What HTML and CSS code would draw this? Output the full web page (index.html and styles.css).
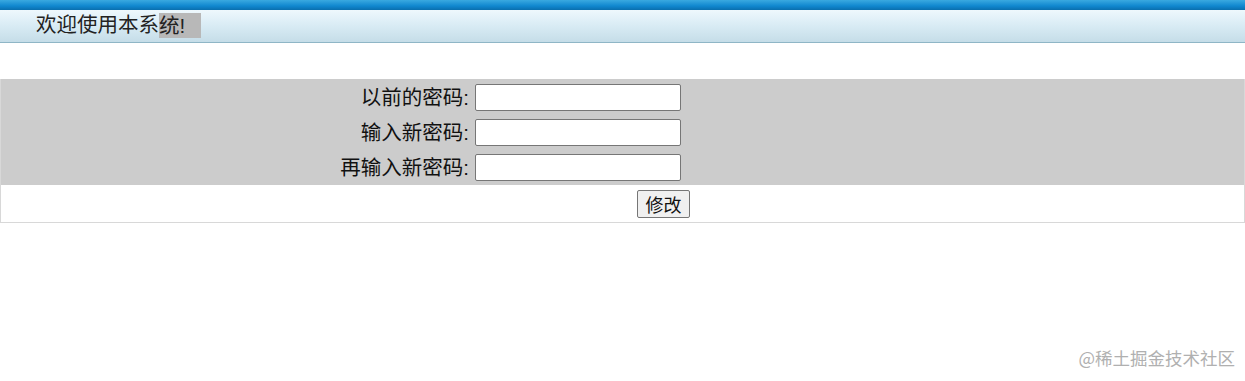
FILE: index.html
```html
<!DOCTYPE html>
<html lang="zh">
<head>
    <meta charset="UTF-8">
    <title>修改密码</title>
    <link rel="stylesheet" href="styles.css">
</head>
<body>
    <div class="top">
        <div class="top-bar"></div>
        <div class="welcome">
            <span>欢迎使用本系</span><span class="sel">统!</span>
        </div>
    </div>

    <form class="pwd-form">
        <div class="fields">
            <label class="label" for="oldPwd">以前的密码:</label>
            <div class="cell"><input type="password" id="oldPwd"></div>
            <label class="label" for="newPwd">输入新密码:</label>
            <div class="cell"><input type="password" id="newPwd"></div>
            <label class="label" for="newPwd2">再输入新密码:</label>
            <div class="cell"><input type="password" id="newPwd2"></div>
        </div>
        <div class="actions">
            <button type="button">修改</button>
        </div>
    </form>

    <div class="watermark">@稀土掘金技术社区</div>
</body>
</html>
```
FILE: styles.css
```css
body {
    margin: 0;
    font-family: "Liberation Sans", "Noto Sans CJK SC", sans-serif;
    color: #111;
    background: #fff;
}

.top {
    height: 43px;
}
.top-bar {
    height: 10px;
    background: linear-gradient(#3aa9e0, #1087cf 60%, #0a6fae);
}
.welcome {
    height: 32px;
    border-bottom: 1px solid #8fb6c6;
    background: linear-gradient(#eef8fd, #d8ebf4 50%, #c5dde8);
    padding-left: 36px;
    font-size: 20.5px;
    line-height: 30px;
    color: #222;
}
.sel {
    display: inline-block;
    background: #b8b8b8;
    height: 25px;
    line-height: 26px;
    padding-right: 16px;
    vertical-align: top;
    margin-top: 3px;
}

.pwd-form {
    margin-top: 36px;
    border: 1px solid #d8d8d8;
    border-top: none;
}
.fields {
    display: grid;
    grid-template-columns: 474px 1fr;
    grid-auto-rows: 35px;
    background: #cccccc;
    padding-top: 1px;
}
.label {
    text-align: right;
    padding-right: 6px;
    font-size: 20.5px;
    line-height: 35px;
    color: #111;
}
.cell {
    display: flex;
    align-items: center;
}
.cell input {
    width: 206px;
    height: 27px;
    box-sizing: border-box;
    border: 1px solid #767676;
    border-radius: 2px;
    background: #fff;
    margin: 0;
}
.actions {
    height: 37px;
    padding-left: 636px;
    display: flex;
    align-items: center;
}
.actions button {
    font-family: "Noto Sans CJK SC", sans-serif;
    font-size: 18px;
    height: 28px;
    width: 53px;
    padding: 0;
    line-height: 24px;
    border: 1px solid #767676;
    border-radius: 2px;
    background: #f0f0f0;
    color: #111;
}

.watermark {
    position: absolute;
    right: 10px;
    bottom: 11px;
    font-size: 17.5px;
    color: #b0b0b0;
    font-family: "Noto Sans CJK SC", sans-serif;
}
```
